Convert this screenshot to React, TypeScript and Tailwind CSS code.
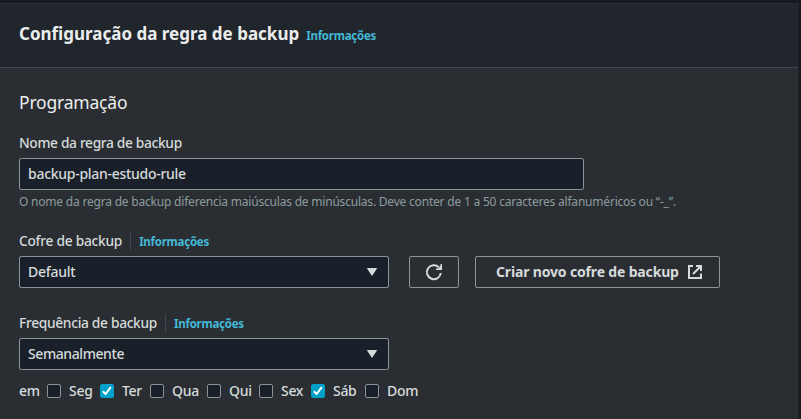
import type { ReactNode } from "react";

function Info({ className = "" }: { className?: string }) {
  return (
    <a className={`text-[11.5px] leading-[18px] font-bold tracking-[-0.25px] whitespace-nowrap text-[#44b9d6] ${className}`}>
      Informações
    </a>
  );
}

function Label({ children, className = "" }: { children: ReactNode; className?: string }) {
  return (
    <span className={`text-[13.75px] leading-[22px] whitespace-nowrap ${className}`}>{children}</span>
  );
}

function Select({ value, className = "" }: { value: string; className?: string }) {
  return (
    <div className="flex h-8 w-[370px] items-center justify-between rounded-[2px] border border-[#879596] bg-[#1a2029] pr-[10px] pl-2">
      <span className={`text-[14px] leading-[22px] ${className}`}>{value}</span>
      <svg width="12" height="10" viewBox="0 0 12 10" className="fill-[#d5dbdb]">
        <path d="M1.5 1.5h9L6 8.3z" stroke="#d5dbdb" strokeLinejoin="round" />
      </svg>
    </div>
  );
}

function Day({ name, checked = false, className = "" }: { name: string; checked?: boolean; className?: string }) {
  return (
    <label className={`flex items-center gap-2 ${className}`}>
      <span
        className={`flex size-[14px] shrink-0 items-center justify-center rounded-[2px] border ${
          checked ? "border-[#00a1c9] bg-[#00a1c9]" : "border-[#879596] bg-[#1a2029]"
        }`}
      >
        {checked && (
          <svg className="shrink-0" width="12" height="12" viewBox="0 0 12 12" fill="none" stroke="#fff" strokeWidth="2">
            <path d="M1.8 6.2 4.6 9l5.2-6.8" />
          </svg>
        )}
      </span>
      <span className="text-[14px] leading-[22px] tracking-[-0.3px]">{name}</span>
    </label>
  );
}

export default function App() {
  return (
    <div className="h-[419px] w-[801px] overflow-hidden bg-[#16191f] pt-[3px] pr-[2px] font-['Noto_Sans',sans-serif] font-medium text-[#d5dbdb]">
      <section className="flex h-[416px] flex-col border-t border-r border-t-[#2a2e33] border-r-[#202428] bg-[#2a2e33]">
        <header className="flex h-16 shrink-0 items-center border-b border-[#414750] bg-[#21252c] pb-[3px] pl-[19px]">
          <h1 className="text-[17px] leading-[22px] font-bold whitespace-nowrap text-[#eaeded]">
            Configuração da regra de backup
          </h1>
          <Info className="ml-[7px] pt-[4px]" />
        </header>
        <div className="flex flex-col pt-[23px] pl-[19px]">
          <h2 className="text-[17.5px] leading-[22px] font-normal tracking-[-0.2px] text-[#eaeded]">Programação</h2>
          <Label className="mt-[19px] tracking-[-0.33px]">Nome da regra de backup</Label>
          <div className="mt-[4px] flex h-8 w-[565px] items-center rounded-[2px] border border-[#879596] bg-[#1a2029] pl-2 text-[14px] tracking-[-0.28px]">
            <span className="leading-[22px]">backup-plan-estudo-rule</span>
          </div>
          <p className="mt-1 text-[12px] leading-4 font-normal tracking-[-0.205px] whitespace-nowrap text-[#8c9c9d]">
            O nome da regra de backup diferencia maiúsculas de minúsculas. Deve conter de 1 a 50 caracteres
            alfanuméricos ou “-_”.
          </p>
          <div className="mt-5 flex h-[22px] items-center">
            <Label className="tracking-[-0.26px]">Cofre de backup</Label>
            <div className="mx-2 h-[18px] w-px bg-[#414750]" />
            <Info className="pt-px" />
          </div>
          <div className="mt-1 flex">
            <Select value="Default" className="tracking-[-0.25px]" />
            <button className="ml-5 flex h-8 w-[50px] items-center justify-center rounded-[2px] border border-[#879596]">
              <svg width="18" height="18" viewBox="0 0 18 18" fill="none" stroke="#d5dbdb" strokeWidth="2">
                <path d="M15.8 10A7 7 0 1 1 13.8 4.2" />
                <path d="M17 1v6h-6V5.500h2L15.500 3V1z" fill="#d5dbdb" stroke="none" />
              </svg>
            </button>
            <button className="ml-4 flex h-8 w-[245px] items-center rounded-[2px] border border-[#879596] pl-5 text-[14px] font-bold whitespace-nowrap">
              <span className="leading-[22px] tracking-[-0.16px]">Criar novo cofre de backup</span>
              <svg className="ml-[8px] shrink-0" width="16" height="16" viewBox="0 0 16 16" fill="none" stroke="#d5dbdb" strokeWidth="2">
                <path d="M6 2H2v12h12V9.500M9 2h5v5M14 2 6 10" />
              </svg>
            </button>
          </div>
          <div className="mt-6 flex h-[22px] items-center">
            <Label className="tracking-[-0.31px]">Frequência de backup</Label>
            <div className="mx-2 h-[18px] w-px bg-[#414750]" />
            <Info className="pt-px" />
          </div>
          <div className="mt-1">
            <Select value="Semanalmente" className="tracking-[-0.42px]" />
          </div>
          <div className="mt-[10px] flex items-center">
            <span className="w-7 text-[14px] leading-[22px] tracking-[-0.3px]">em</span>
            <Day name="Seg" className="w-[53px]" />
            <Day name="Ter" checked className="w-[50px]" />
            <Day name="Qua" className="w-[57px]" />
            <Day name="Qui" className="w-[52px]" />
            <Day name="Sex" className="w-[52px]" />
            <Day name="Sáb" checked className="w-[54px]" />
            <Day name="Dom" />
          </div>
        </div>
      </section>
    </div>
  );
}
